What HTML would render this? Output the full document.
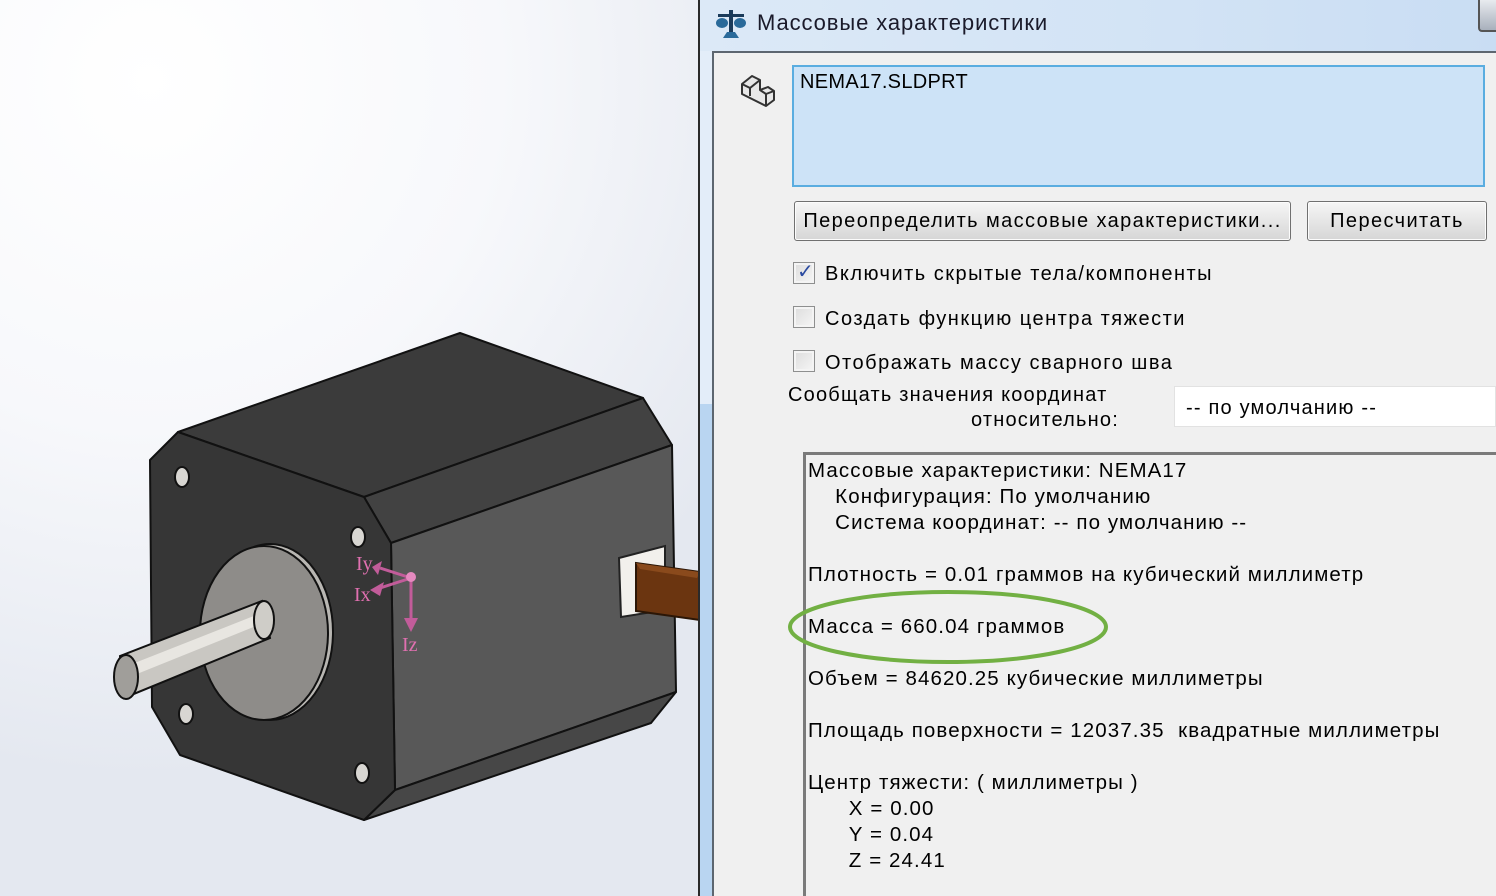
<!DOCTYPE html>
<html><head><meta charset="utf-8"><style>
*{margin:0;padding:0;box-sizing:border-box}
body{width:1496px;height:896px;overflow:hidden;position:relative;font-family:"Liberation Sans","DejaVu Sans",sans-serif;color:#000;background:radial-gradient(ellipse 700px 700px at 150px 80px,#ffffff 0%,#f7f8fb 50%,#e4e8f0 100%)}
.a{position:absolute;white-space:nowrap}
.t{font-size:20px;letter-spacing:1.5px}
.btn{position:absolute;border:1px solid #707070;border-radius:3px;background:linear-gradient(#f6f6f6,#e6e6e6 50%,#d6d6d6);box-shadow:inset 0 0 0 1px #fcfcfc;font-size:20px;letter-spacing:1.4px;text-align:center;line-height:38px}
.cb{position:absolute;width:22px;height:22px;border:1px solid #8e8f8f;background:linear-gradient(135deg,#dcdcdc,#f6f6f6);box-shadow:inset 0 0 0 2px #f4f4f4}
.res{font-size:20.5px;line-height:26px;letter-spacing:1.1px}
</style></head><body>
<svg class="a" style="left:0;top:0" width="700" height="896">
<polygon points="178,432 460,333 643,398 364,497" fill="#3b3b3b" stroke="#111" stroke-width="2" stroke-linejoin="round"/>
<polygon points="643,398 672,445 391,543 364,497" fill="#424242" stroke="#111" stroke-width="2" stroke-linejoin="round"/>
<polygon points="391,543 672,445 676,692 395,790" fill="#585858" stroke="#111" stroke-width="2" stroke-linejoin="round"/>
<polygon points="676,692 651,723 364,820 395,790" fill="#474747" stroke="#111" stroke-width="2" stroke-linejoin="round"/>
<polygon points="178,432 364,497 391,543 395,790 364,820 180,755 152,707 150,460" fill="#363636" stroke="#111" stroke-width="2" stroke-linejoin="round"/>
<ellipse cx="182" cy="477" rx="7" ry="10" fill="#d8d6d2" stroke="#111" stroke-width="2"/>
<ellipse cx="358" cy="537" rx="7" ry="10" fill="#d8d6d2" stroke="#111" stroke-width="2"/>
<ellipse cx="186" cy="714" rx="7" ry="10" fill="#d8d6d2" stroke="#111" stroke-width="2"/>
<ellipse cx="362" cy="773" rx="7" ry="10" fill="#d8d6d2" stroke="#111" stroke-width="2"/>
<ellipse cx="270" cy="632" rx="63" ry="88" fill="#b8b6b2" stroke="#111" stroke-width="2"/>
<ellipse cx="264" cy="633" rx="64" ry="87" fill="#8e8c89" stroke="#111" stroke-width="2"/>
<polygon points="120,656 262,601 270,638 124,698" fill="#c9c7c2" stroke="#111" stroke-width="2"/>
<polygon points="122,668 264,612 266,622 122,680" fill="#e8e6e1"/>
<ellipse cx="264" cy="620" rx="10" ry="19" fill="#cfcdc8" stroke="#111" stroke-width="2"/>
<ellipse cx="126" cy="677" rx="12" ry="22" fill="#a09e9a" stroke="#111" stroke-width="2"/>
<polygon points="619,558 665,546 665,610 621,617" fill="#f2f0ec" stroke="#222" stroke-width="2"/>
<polygon points="636,563 700,572 700,620 636,611" fill="#6b3510" stroke="#2b1606" stroke-width="2"/>
<polygon points="636,563 700,572 697,578 640,569" fill="#8a4a1c"/>
<g stroke="#c25c9a" stroke-width="3" fill="#d874b0">
<line x1="411" y1="578" x2="380" y2="568"/>
<line x1="411" y1="578" x2="380" y2="588"/>
<line x1="411" y1="578" x2="411" y2="622"/>
</g>
<polygon points="404,618 418,618 411,632" fill="#c25c9a"/>
<polygon points="382,561 378,575 372,567" fill="#c25c9a"/>
<polygon points="384,582 380,596 370,590" fill="#c25c9a"/>
<circle cx="411" cy="577" r="5" fill="#e68ac0"/>
<text x="356" y="570" font-family="Liberation Serif,serif" font-size="20" fill="#e070b0">Iy</text>
<text x="354" y="601" font-family="Liberation Serif,serif" font-size="20" fill="#e070b0">Ix</text>
<text x="402" y="651" font-family="Liberation Serif,serif" font-size="20" fill="#e070b0">Iz</text>
</svg>

<div class="a" style="left:698px;top:0;width:2px;height:896px;background:#2a2a2a"></div>
<div class="a" style="left:700px;top:0;width:796px;height:51px;background:linear-gradient(90deg,#dce9f7,#d2e3f5 60%,#c9ddf3)"></div>
<div class="a" style="left:700px;top:51px;width:12px;height:353px;background:#e3edf9"></div>
<div class="a" style="left:700px;top:404px;width:12px;height:492px;background:#b9d5f1"></div>
<div class="a" style="left:1478px;top:0;width:18px;height:32px;background:linear-gradient(#e8ebef,#a8b0bc);border-left:2px solid #555;border-bottom:2px solid #555;border-bottom-left-radius:4px"></div>
<div class="a" style="left:712px;top:51px;width:784px;height:845px;background:#f0f0f0;border-top:2px solid #5d6670;border-left:2px solid #5d6670"></div>
<svg class="a" style="left:714px;top:8px" width="34" height="32"><g fill="#1a3a5a"><rect x="15" y="2" width="4" height="24"/><rect x="4" y="6" width="26" height="3"/><ellipse cx="8" cy="15" rx="6" ry="5" fill="#2a6a9a"/><ellipse cx="26" cy="15" rx="6" ry="5" fill="#2a6a9a"/><polygon points="9,30 25,30 21,24 13,24" fill="#2a6a9a"/></g></svg>
<div class="a" style="left:757px;top:10px;font-size:22px;letter-spacing:0.9px;color:#1a1a2a">Массовые характеристики</div>
<svg class="a" style="left:738px;top:70px" width="40" height="40"><g stroke="#333" stroke-width="2" fill="#e8e8e8" stroke-linejoin="round"><polygon points="4,14 14,6 22,10 22,20 30,17 36,21 36,30 28,36 4,24"/><polyline points="4,14 12,18 12,26" fill="none"/><polyline points="12,18 22,10" fill="none"/><polyline points="22,20 28,24 28,36" fill="none"/><polyline points="28,24 36,21" fill="none"/></g></svg>
<div class="a" style="left:792px;top:65px;width:693px;height:122px;background:#cde3f7;border:2px solid #5aade0"></div>
<div class="a t" style="left:800px;top:71px;letter-spacing:0.3px">NEMA17.SLDPRT</div>
<div class="btn" style="left:794px;top:201px;width:497px;height:40px">Переопределить массовые характеристики...</div>
<div class="btn" style="left:1307px;top:201px;width:180px;height:40px">Пересчитать</div>
<div class="cb" style="left:793px;top:262px"></div>
<div class="a" style="left:797px;top:259px;font-size:20px;color:#2a4aa0;font-weight:bold">✓</div>
<div class="a t" style="left:825px;top:263px">Включить скрытые тела/компоненты</div>
<div class="cb" style="left:793px;top:306px"></div>
<div class="a t" style="left:825px;top:308px">Создать функцию центра тяжести</div>
<div class="cb" style="left:793px;top:350px"></div>
<div class="a t" style="left:825px;top:352px">Отображать массу сварного шва</div>
<div class="a t" style="left:788px;top:384px;letter-spacing:1.2px">Сообщать значения координат</div>
<div class="a t" style="left:971px;top:409px;letter-spacing:1.2px">относительно:</div>
<div class="a" style="left:1174px;top:386px;width:322px;height:41px;background:#fff;border:1px solid #e2e2e2"></div>
<div class="a t" style="left:1186px;top:397px;letter-spacing:1.2px">-- по умолчанию --</div>
<div class="a" style="left:803px;top:452px;width:693px;height:444px;border-top:3px solid #7a7a7a;border-left:3px solid #7a7a7a;background:#f0f0f0"></div>
<div class="a res" style="left:808px;top:458px">Массовые характеристики: NEMA17<br>&nbsp;&nbsp;&nbsp;&nbsp;Конфигурация: По умолчанию<br>&nbsp;&nbsp;&nbsp;&nbsp;Система координат: -- по умолчанию --<br><br>Плотность = 0.01 граммов на кубический миллиметр<br><br>Масса = 660.04 граммов<br><br>Объем = 84620.25 кубические миллиметры<br><br>Площадь поверхности = 12037.35&nbsp; квадратные миллиметры<br><br>Центр тяжести: ( миллиметры )<br>&nbsp;&nbsp;&nbsp;&nbsp;&nbsp;&nbsp;X = 0.00<br>&nbsp;&nbsp;&nbsp;&nbsp;&nbsp;&nbsp;Y = 0.04<br>&nbsp;&nbsp;&nbsp;&nbsp;&nbsp;&nbsp;Z = 24.41</div>
<svg class="a" style="left:780px;top:585px" width="340" height="85"><ellipse cx="168" cy="42" rx="158" ry="35" fill="none" stroke="#72b043" stroke-width="4"/></svg>
</body></html>
